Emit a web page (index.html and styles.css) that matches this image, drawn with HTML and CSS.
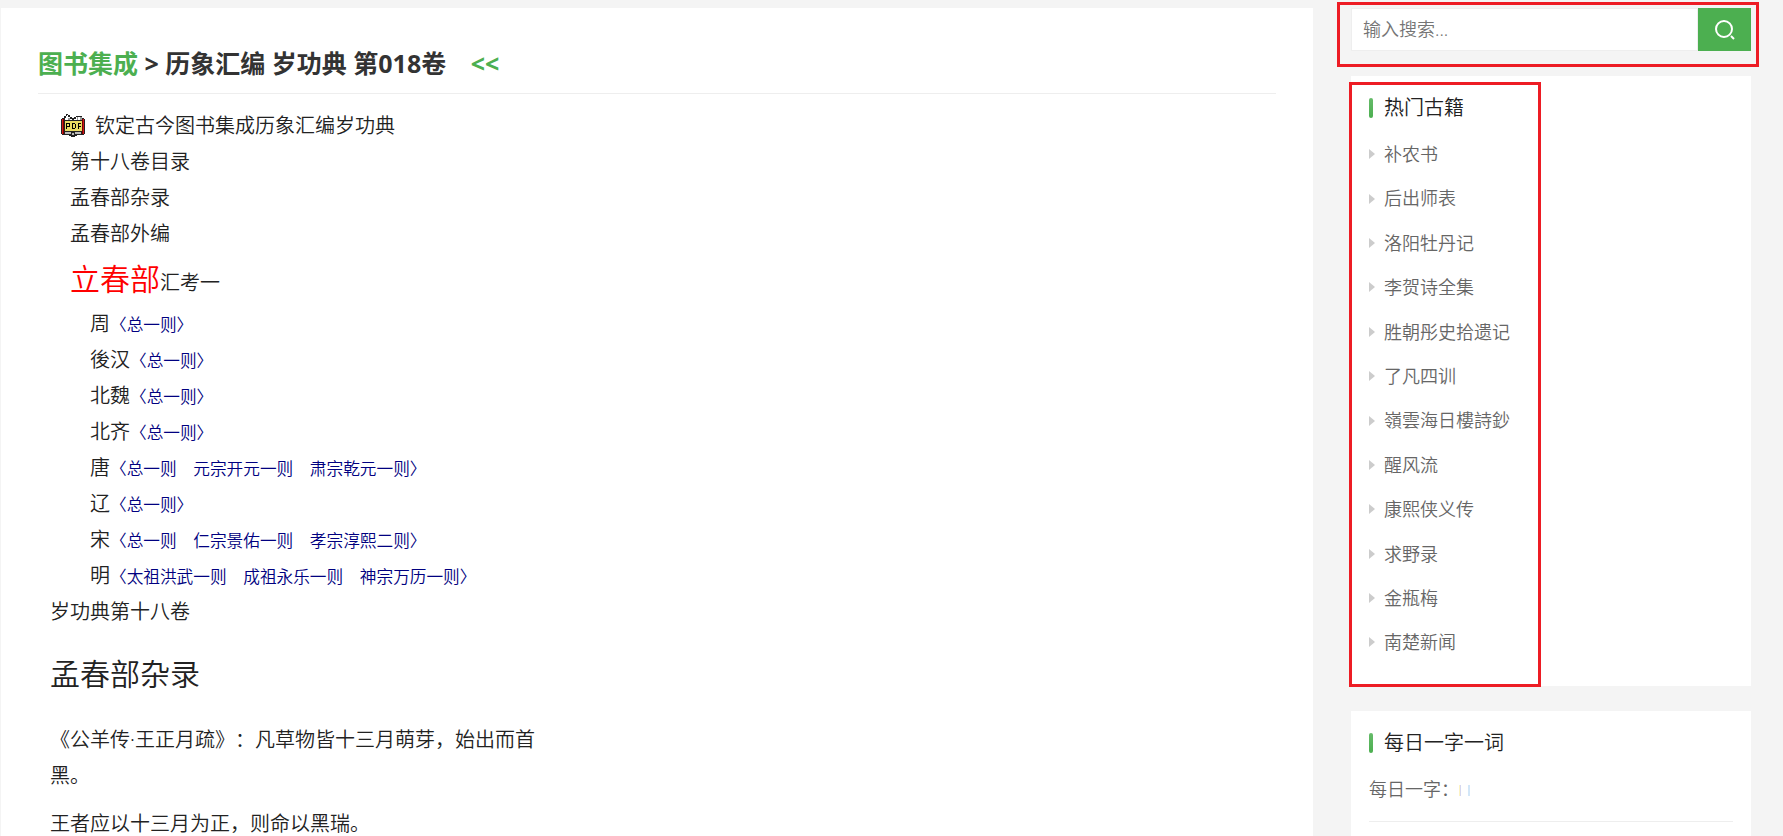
FILE: index.html
```html
<!DOCTYPE html>
<html lang="zh-CN">
<head>
    <meta charset="utf-8">
    <title>历象汇编 岁功典 第018卷</title>
    <link rel="stylesheet" href="styles.css">
</head>
<body>
<div class="wrap">
    <div class="main">
        <h1><a href="#">图书集成</a> &gt; 历象汇编 岁功典 第018卷 <a class="prev" href="#">&lt;&lt;</a></h1>
        <div class="content">
            <div class="pdf">
                <a href="#" title="PDF"><svg width="26" height="24" viewBox="0 0 26 24" shape-rendering="crispEdges">
                    <path fill="#222" d="M2 4h2V2h2V0h2v1h2v2h2v1h2V3h2V2h6v2h2v1h1v15h-1v1h-7v1h-2v1h-4v-1H9v-1H2v-1H1V5h1z"/>
                    <path fill="#d01818" d="M2 5h2v15H2zM23 5h1v15h-1z"/>
                    <path fill="#700" d="M3 5h1v15H3zM22 5h1v15h-1z"/>
                    <path fill="#fff" d="M5 4h1V2h1V1h1v2h2v2h2v1H5zM14 5h2V3h4v3h-6z"/>
                    <path fill="#999" d="M8 4h2v2H8zM17 3h1v3h-1zM20 3h2v3h-2z"/>
                    <path fill="#e9dc62" d="M5 7h17v10H5z"/>
                    <path fill="#bbb" d="M5 18h6v2H5zM15 18h6v2h-6zM12 19h2v2h-2z"/>
                    <path stroke="#000" fill="none" d="M6.500 15V9.500h3v3h-3M12.500 9v5.500h2l1-1v-3l-1-1h-2M18.500 15V9.500H21M18 12.500h3"/>
                </svg></a>
                钦定古今图书集成历象汇编岁功典
            </div>
            <div class="indent">第十八卷目录</div>
            <div class="indent">孟春部杂录</div>
            <div class="indent">孟春部外编</div>
            <div class="indent"><span class="red">立春部</span>汇考一</div>
            <div class="indent2">周<small>〈总一则〉</small></div>
            <div class="indent2">後汉<small>〈总一则〉</small></div>
            <div class="indent2">北魏<small>〈总一则〉</small></div>
            <div class="indent2">北齐<small>〈总一则〉</small></div>
            <div class="indent2">唐<small>〈总一则　元宗开元一则　肃宗乾元一则〉</small></div>
            <div class="indent2">辽<small>〈总一则〉</small></div>
            <div class="indent2">宋<small>〈总一则　仁宗景佑一则　孝宗淳熙二则〉</small></div>
            <div class="indent2">明<small>〈太祖洪武一则　成祖永乐一则　神宗万历一则〉</small></div>
            <div>岁功典第十八卷</div>
            <h2>孟春部杂录</h2>
            <p>《公羊传·王正月疏》：凡草物皆十三月萌芽，始出而首黑。</p>
            <p>王者应以十三月为正，则命以黑瑞。</p>
        </div>
    </div>

    <div class="side">
        <form class="search marked">
            <input type="text" placeholder="输入搜索..." aria-label="输入搜索">
            <button type="button" aria-label="搜索">
                <svg width="20" height="20" viewBox="0 0 20 20" fill="none" stroke="#fff" stroke-width="2">
                    <circle cx="9" cy="9" r="8"/>
                    <path d="M16 16l3 3"/>
                </svg>
            </button>
        </form>

        <div class="card hot marked">
            <h3>热门古籍</h3>
            <ul>
                <li><a href="#">补农书</a></li>
                <li><a href="#">后出师表</a></li>
                <li><a href="#">洛阳牡丹记</a></li>
                <li><a href="#">李贺诗全集</a></li>
                <li><a href="#">胜朝彤史拾遗记</a></li>
                <li><a href="#">了凡四训</a></li>
                <li><a href="#">嶺雲海日樓詩鈔</a></li>
                <li><a href="#">醒风流</a></li>
                <li><a href="#">康熙侠义传</a></li>
                <li><a href="#">求野录</a></li>
                <li><a href="#">金瓶梅</a></li>
                <li><a href="#">南楚新闻</a></li>
            </ul>
        </div>

        <div class="card">
            <h3>每日一字一词</h3>
            <div class="daily">每日一字：<span class="tick"></span><span class="tick blue"></span></div>
        </div>
    </div>
</div>
</body>
</html>
```
FILE: styles.css
```css
* {
    box-sizing: border-box;
}

body {
    margin: 0;
    background: #f4f4f4;
    color: #222;
    font-family: "Noto Sans", "Noto Sans CJK SC", sans-serif;
    font-size: 20px;
    font-weight: 350;
    line-height: 1.8;
    text-spacing-trim: space-all;
}

a {
    color: #4caf50;
    text-decoration: none;
}

h1, h2, h3, p, ul {
    margin: 0;
    padding: 0;
}

.wrap {
    display: flex;
    gap: 38px;
    margin: 8px 32px 0 1px;
}

/* left column */
.main {
    flex: 1;
    min-width: 0;
    padding: 33px 37px;
    background: #fff;
}

h1 {
    padding-bottom: 7px;
    border-bottom: 1px solid #eee;
    color: #333;
    font-size: 25px;
    font-weight: bold;
}

.prev {
    margin-left: 18px;
}

.content {
    padding: 14px 12px 0;
}

.pdf {
    display: flex;
    align-items: center;
    gap: 9px;
    padding-left: 10px;
}

.pdf svg {
    display: block;
}

.indent {
    padding-left: 20px;
}

.indent2 {
    padding-left: 40px;
}

.indent2 small {
    color: #000080;
}

.red {
    color: #f00;
    font-size: 30px;
}

h2 {
    margin: 17px 0 21px;
    font-size: 30px;
    font-weight: 350;
}

p {
    max-width: 500px;
    margin-bottom: 12px;
}

/* right column */
.side {
    flex: 0 0 400px;
}

.search {
    display: flex;
    height: 43px;
    margin-bottom: 25px;
}

.search input {
    flex: 1;
    min-width: 0;
    padding: 0 11px;
    border: 1px solid #eee;
    background: #fff;
    font: inherit;
    font-size: 18px;
}

.search input::placeholder {
    color: #757575;
}

.search button {
    display: flex;
    align-items: center;
    justify-content: center;
    width: 53px;
    padding: 0;
    border: 0;
    background: #4caf50;
}

.card {
    margin-bottom: 25px;
    padding: 14px 18px 21px;
    background: #fff;
}

h3 {
    display: flex;
    align-items: center;
    gap: 11px;
    margin-bottom: 6px;
    color: #222;
    font-size: 20px;
    font-weight: 350;
}

h3::before {
    content: "";
    width: 4px;
    height: 20px;
    border-radius: 2px;
    background: linear-gradient(#66bb6a, #4caf50);
}

.card ul {
    list-style: none;
}

.card li {
    display: flex;
    align-items: center;
    gap: 9px;
    padding: 6px 0;
    font-size: 18px;
}

.card li::before {
    content: "";
    border: 5px solid transparent;
    border-left: 6px solid #ccc;
    border-right: 0;
}

.card li a {
    color: #666;
}

.daily {
    padding: 6px 0 16px;
    border-bottom: 1px solid #eee;
    color: #666;
    font-size: 18px;
}

.tick {
    display: inline-block;
    width: 2px;
    height: 11px;
    margin-right: 7px;
    background: linear-gradient(90deg, #fdf3c4 50%, #d5d8f0 50%);
}

.tick.blue {
    background: #d3e7f8;
}

/* red frames round the search box and the hot list */
.marked {
    position: relative;
}

.marked::after {
    content: "";
    position: absolute;
    inset: -6px -8px -16px -14px;
    border: 3px solid #ed1c24;
    pointer-events: none;
}

.hot::after {
    inset: 6px auto -1px -2px;
    width: 186px;
}
```
